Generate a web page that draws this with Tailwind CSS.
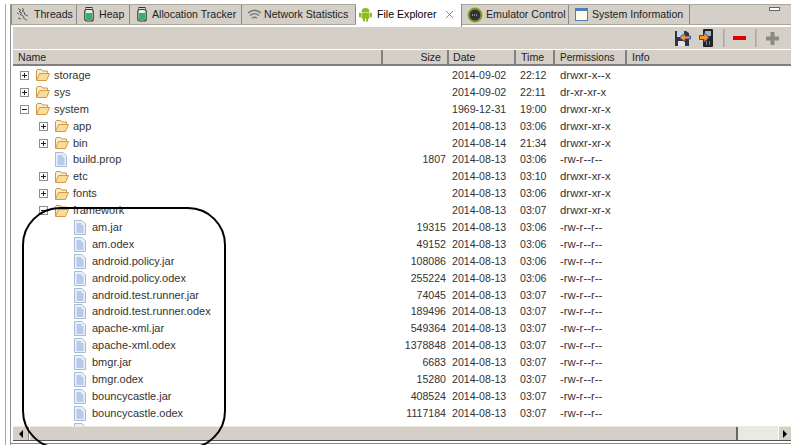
<!DOCTYPE html>
<html lang="en">
<head>
<meta charset="UTF-8">
<title>File Explorer</title>
<script src="https://cdn.jsdelivr.net/npm/@tailwindcss/browser@4"></script>
</head>
<body class="bg-white">
<svg width="0" height="0" class="absolute">
  <defs>
    <symbol id="folder" viewBox="0 0 16 14">
      <path d="M1.500 12V3l1-1.500h4l1 1.500h5v2" fill="#fbeecb" stroke="#c8954a"/>
      <path d="M1.500 12.500l3-7h10l-3 7z" fill="#f9dc9a" stroke="#d49a45" stroke-linejoin="round"/>
    </symbol>
    <symbol id="doc" viewBox="0 0 12 15">
      <path d="M.5.5h7.500l3.500 3.500v10.500H.5z" fill="#eaf0fa" stroke="#a9b9d6"/>
      <path d="M2.500 4h5M2.500 6h7M2.500 8h7M2.500 10h7M2.500 12h7" stroke="#86a4d2"/>
    </symbol>
    <symbol id="plus" viewBox="0 0 9 9">
      <rect x=".5" y=".5" width="8" height="8" fill="#fff" stroke="#8f8f8f"/>
      <path d="M2 4.500h5M4.500 2v5" stroke="#222"/>
    </symbol>
    <symbol id="minus" viewBox="0 0 9 9">
      <rect x=".5" y=".5" width="8" height="8" fill="#fff" stroke="#8f8f8f"/>
      <path d="M2 4.500h5" stroke="#222"/>
    </symbol>
    <symbol id="jar" viewBox="0 0 10 15">
      <rect x="2" y=".5" width="6" height="2" fill="#ddd" stroke="#333"/>
      <rect x=".8" y="2.500" width="8.400" height="11.500" rx="2" fill="#e8efe8" stroke="#2f3a30" stroke-width="1.200"/>
      <rect x="2" y="6" width="6" height="7" fill="#2fb56a"/>
    </symbol>
  </defs>
</svg>
<div class="flex w-[791px] h-[445px] overflow-hidden bg-white relative font-['Liberation_Sans',sans-serif] text-[10.6px] leading-[17px] text-[#333]">
  <!-- left gutter lines -->
  <div class="flex w-[11px] shrink-0 pt-[4px]">
    <div class="w-[6px] border-r border-[#aca899]"></div>
    <div class="w-[5px] border-r border-[#909090]"></div>
  </div>
  <div class="flex flex-col flex-1 min-w-0">
    <!-- tabs -->
    <div class="h-[27px] shrink-0 pt-[4px]">
      <div class="flex h-[21px] bg-[#d4d0c8] border-y border-[#aca899] text-[#222] whitespace-nowrap">
        <div class="flex items-center gap-[3px] pl-[3px] border-x border-[#888] w-[66px]">
          <svg width="16" height="16" viewBox="0 0 16 16" fill="none" stroke="#444" stroke-width=".8" class="shrink-0"><path d="M3 1.500l3 2-2 1 3 2-2 1 4 2-1 1 4 3M7 1l2 2-2 1 3 2-1 1 4 2M3 11l3 1M2 6l2 1"/></svg><span>Threads</span>
        </div>
        <div class="flex items-center gap-[5px] pl-[7px] border-r border-[#888] w-[53px]"><svg width="10" height="15" class="shrink-0"><use href="#jar"/></svg><span>Heap</span></div>
        <div class="flex items-center gap-[5px] pl-[7px] border-r border-[#888] w-[112px]"><svg width="10" height="15" class="shrink-0"><use href="#jar"/></svg><span>Allocation Tracker</span></div>
        <div class="flex items-center gap-[2px] pl-[5px] border-r border-[#888] w-[114px]">
          <svg width="15" height="12" viewBox="0 0 15 12" fill="none" stroke="#777" stroke-width="1.400" class="shrink-0"><path d="M1 4c4-3.500 9-3.500 13 0M3 6.500c3-2.500 6-2.500 9 0M5 9c2-1.300 3-1.300 5 0"/></svg><span>Network Statistics</span>
        </div>
        <div class="flex items-center gap-[4px] pl-[2px] pb-[2px] w-[106px] h-[23px] -mt-px bg-white text-black border-r border-[#888]">
          <svg width="15" height="15" viewBox="0 0 15 15" fill="#8fbb22" class="shrink-0"><path d="M3.500 5a4 4 0 018 0z"/><rect x="3.500" y="5.500" width="8" height="6"/><rect x="1" y="5.500" width="2" height="5" rx="1"/><rect x="12" y="5.500" width="2" height="5" rx="1"/><rect x="5" y="11" width="2" height="3.500"/><rect x="8" y="11" width="2" height="3.500"/></svg>
          <span>File Explorer</span>
          <svg width="9" height="9" viewBox="0 0 9 9" fill="none" stroke="#888" class="ml-[5px] shrink-0"><path d="M1 1l7 7M8 1L1 8"/></svg>
        </div>
        <div class="flex items-center gap-[3px] pl-[5px] border-r border-[#888] w-[107px]">
          <svg width="16" height="16" viewBox="0 0 16 16" class="shrink-0"><circle cx="8" cy="8" r="6.500" fill="#333" stroke="#7f9f2a" stroke-width="2"/><path d="M5 8h6" stroke="#ddd" stroke-dasharray="1 1"/></svg>
          <span>Emulator Control</span>
        </div>
        <div class="flex items-center gap-[4px] pl-[6px] border-r border-[#888] w-[121px]">
          <svg width="13" height="13" viewBox="0 0 13 13" class="shrink-0"><rect x=".5" y=".5" width="12" height="12" fill="#fffde8" stroke="#4a7fc0"/><path d="M1 2h11" stroke="#4a7fc0" stroke-width="2"/></svg>
          <span>System Information</span>
        </div>
        <div class="flex-1 flex justify-end pr-[11px] pt-[2px]"><div class="w-[11px] h-[4px] bg-white border border-[#666]"></div></div>
      </div>
    </div>
    <!-- view -->
    <div class="flex flex-col flex-1 min-h-0 pl-[2px]">
      <div class="flex items-center justify-end h-[22px] shrink-0 pr-[12px] bg-[#d4d0c8]">
        <svg width="16" height="15" viewBox="0 0 16 15" class="mr-[8px]"><path d="M0 0h11l3 2v13H0z" fill="#34343e"/><rect x="2" y="0" width="7" height="6" fill="#c9d3ea"/><rect x="3" y="10" width="7" height="5" fill="#e4e4e4"/><path d="M15.500 5H10V2L4.500 6.500 10 11V8h5.500z" fill="#f7961c" stroke="#2340c0" stroke-width=".9"/></svg>
        <svg width="15" height="18" viewBox="0 0 15 18" class="mr-[9px]"><rect x="4" y="0" width="10" height="18" rx="1" fill="#222"/><rect x="6" y="2" width="6" height="5" fill="#9fb2cc"/><path d="M7 13h1M10 13h1M7 15h1M10 15h1" stroke="#ddd"/><path d="M.5 6.500H5V3.500l5 5-5 5v-3H.5z" fill="#f7961c" stroke="#2340c0" stroke-width=".9"/></svg>
        <div class="w-[2px] h-[18px] bg-[#bdb9b0] border-l border-[#aca899] mr-[8px]"></div>
        <div class="w-[13px] h-[4px] bg-[#e00000] mr-[9px]"></div>
        <div class="w-[2px] h-[18px] bg-[#bdb9b0] border-l border-[#aca899] mr-[9px]"></div>
        <svg width="13" height="13" viewBox="0 0 13 13" fill="#8b8b83"><path d="M4.500 0h4v4.500H13v4H8.500V13h-4V8.500H0v-4h4.500z"/></svg>
      </div>
      <div class="flex h-[17px] shrink-0 bg-[#d4d0c8] border-t border-white border-b-2 border-b-[#808080] text-[#222] whitespace-nowrap">
        <div class="w-[370px] pl-[5px] border-r-2 border-[#808080] flex items-center">Name</div>
        <div class="w-[66px] pr-[6px] border-r-2 border-[#808080] flex items-center justify-end">Size</div>
        <div class="w-[67px] pl-[4px] border-r-2 border-[#808080] flex items-center">Date</div>
        <div class="w-[39px] pl-[5px] border-r-2 border-[#808080] flex items-center">Time</div>
        <div class="w-[72px] pl-[5px] border-r-2 border-[#808080] flex items-center text-[10px]">Permissions</div>
        <div class="pl-[5px] flex items-center">Info</div>
      </div>
      <div id="rows" class="flex-1 min-h-0 overflow-hidden bg-white pt-px whitespace-nowrap"></div>
      <div class="flex h-[15px] shrink-0 bg-[#d4d0c8] border-t border-[#eeeade] border-b border-b-[#555]">
        <div class="w-[16px] flex items-center justify-center border-r border-[#888]"><div class="border-y-[4px] border-y-transparent border-r-[4px] border-r-black"></div></div>
        <div class="w-[709px] border-r-2 border-[#666] border-l border-l-white"></div>
        <div class="flex-1 bg-[#ebe9e3]"></div>
        <div class="w-[13px] flex items-center justify-center border-l border-white"><div class="border-y-[4px] border-y-transparent border-l-[4px] border-l-black"></div></div>
      </div>
      <div class="h-[4px] shrink-0 pt-[2px] -ml-[2px]"><div class="h-px bg-[#888]"></div></div>
    </div>
  </div>
  <!-- hand-drawn ink outline over the list -->
  <div class="absolute left-[22px] top-[207px] w-[204px] h-[242px] rounded-[38px] border-2 border-black pointer-events-none"></div>
</div>
<script>
// type: p = collapsed folder, m = expanded folder, f = file
const rows = [
  ['p', 0, 'storage', '', '2014-09-02', '22:12', 'drwxr-x--x'],
  ['p', 0, 'sys', '', '2014-09-02', '22:11', 'dr-xr-xr-x'],
  ['m', 0, 'system', '', '1969-12-31', '19:00', 'drwxr-xr-x'],
  ['p', 1, 'app', '', '2014-08-13', '03:06', 'drwxr-xr-x'],
  ['p', 1, 'bin', '', '2014-08-14', '21:34', 'drwxr-xr-x'],
  ['f', 1, 'build.prop', '1807', '2014-08-13', '03:06', '-rw-r--r--'],
  ['p', 1, 'etc', '', '2014-08-13', '03:10', 'drwxr-xr-x'],
  ['p', 1, 'fonts', '', '2014-08-13', '03:06', 'drwxr-xr-x'],
  ['m', 1, 'framework', '', '2014-08-13', '03:07', 'drwxr-xr-x'],
  ['f', 2, 'am.jar', '19315', '2014-08-13', '03:06', '-rw-r--r--'],
  ['f', 2, 'am.odex', '49152', '2014-08-13', '03:06', '-rw-r--r--'],
  ['f', 2, 'android.policy.jar', '108086', '2014-08-13', '03:06', '-rw-r--r--'],
  ['f', 2, 'android.policy.odex', '255224', '2014-08-13', '03:06', '-rw-r--r--'],
  ['f', 2, 'android.test.runner.jar', '74045', '2014-08-13', '03:07', '-rw-r--r--'],
  ['f', 2, 'android.test.runner.odex', '189496', '2014-08-13', '03:07', '-rw-r--r--'],
  ['f', 2, 'apache-xml.jar', '549364', '2014-08-13', '03:07', '-rw-r--r--'],
  ['f', 2, 'apache-xml.odex', '1378848', '2014-08-13', '03:07', '-rw-r--r--'],
  ['f', 2, 'bmgr.jar', '6683', '2014-08-13', '03:07', '-rw-r--r--'],
  ['f', 2, 'bmgr.odex', '15280', '2014-08-13', '03:07', '-rw-r--r--'],
  ['f', 2, 'bouncycastle.jar', '408524', '2014-08-13', '03:07', '-rw-r--r--'],
  ['f', 2, 'bouncycastle.odex', '1117184', '2014-08-13', '03:07', '-rw-r--r--'],
  ['f', 2, 'bu.jar', '', '', '', '']
];

function nameCell(type, depth, name) {
  const left = 7 + depth * 19;
  if (type === 'f') {
    return `<div class="w-[370px] flex items-center text-[11px]" style="padding-left:${left + 16}px"><svg width="12" height="15" class="mr-[6px] shrink-0"><use href="#doc"/></svg>${name}</div>`;
  }
  const box = type === 'p' ? '#plus' : '#minus';
  return `<div class="w-[370px] flex items-center text-[11px]" style="padding-left:${left}px"><svg width="9" height="9" class="mr-[6px] shrink-0"><use href="${box}"/></svg><svg width="16" height="14" class="mr-[3px] shrink-0"><use href="#folder"/></svg>${name}</div>`;
}

document.getElementById('rows').innerHTML = rows.map(([type, depth, name, size, date, time, perm]) => `
  <div class="flex h-[16.9px]">
    ${nameCell(type, depth, name)}
    <div class="w-[63px] text-right">${size}</div>
    <div class="w-[74px] pl-[6px]">${date}</div>
    <div class="w-[40px]">${time}</div>
    <div class="w-[72px] text-[11.4px]">${perm}</div>
  </div>`).join('');
</script>
</body>
</html>
